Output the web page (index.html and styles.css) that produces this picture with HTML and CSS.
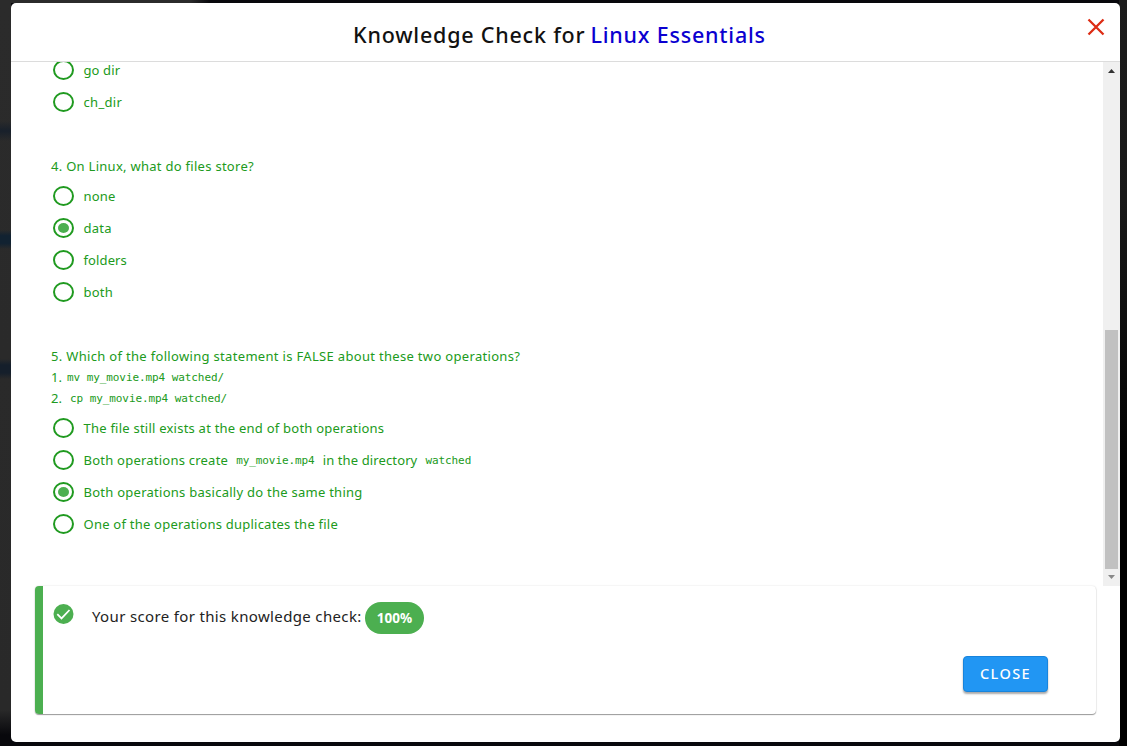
FILE: index.html
```html
<!DOCTYPE html>
<html lang="en">
<head>
<meta charset="utf-8">
<title>Knowledge Check for Linux Essentials</title>
<link rel="stylesheet" href="styles.css">
</head>
<body>
<div class="dialog">
  <header class="header">
    <h1 class="title"><span class="t-main">Knowledge Check for</span><span class="t-course">Linux Essentials</span></h1>
    <svg class="dismiss" width="18" height="18" viewBox="0 0 18 18"><path d="M1.5 1.5l15 15M16.5 1.5l-15 15" stroke="#dd2c14" stroke-width="2.3" fill="none"/></svg>
  </header>
  <div class="viewport">
    <main class="quiz">
      <section class="question first">
        <label class="option"><i class="radio"></i><span class="short">go dir</span></label>
        <label class="option"><i class="radio"></i><span class="ask-width">ch_dir</span></label>
      </section>
      <section class="question">
        <p class="prompt"><span class="ask tight">4. On Linux, what do files store?</span></p>
        <label class="option"><i class="radio"></i><span class="answer">none</span></label>
        <label class="option"><i class="radio on"></i><span class="answer">data</span></label>
        <label class="option"><i class="radio"></i><span class="short">folders</span></label>
        <label class="option"><i class="radio"></i><span class="answer">both</span></label>
      </section>
      <section class="question">
        <p class="prompt"><span class="ask">5. Which of the following statement is FALSE about these two operations?</span></p>
        <p class="prompt"><span class="num one">1.</span><code>mv my_movie.mp4 watched/</code></p>
        <p class="prompt"><span class="num two">2.</span><code>cp my_movie.mp4 watched/</code></p>
        <label class="option"><i class="radio"></i><span class="answer">The file still exists at the end of both operations</span></label>
        <label class="option"><i class="radio"></i><span class="answer">Both operations create</span><code class="inline">my_movie.mp4</code><span class="short">in the directory</span><code class="inline">watched</code></label>
        <label class="option"><i class="radio on"></i><span class="answer wide">Both operations basically do the same thing</span></label>
        <label class="option"><i class="radio"></i><span class="answer">One of the operations duplicates the file</span></label>
      </section>
    </main>
    <div class="scrollbar">
      <svg width="7" height="4" viewBox="0 0 7 4"><path d="M3.5 0L7 4H0z" fill="#333"/></svg>
      <div class="thumb"></div>
      <svg width="7" height="4" viewBox="0 0 7 4"><path d="M0 0h7L3.5 4z" fill="#888"/></svg>
    </div>
  </div>
  <footer class="result">
    <div class="score">
      <svg class="check" width="21" height="20" viewBox="0 0 21 20"><circle cx="10.5" cy="10" r="10" fill="#4caf50"/><path d="M4.3 10.2l4.2 4.2 8-8.4" stroke="#fff" stroke-width="1.8" fill="none"/></svg>
      <span class="score-text">Your score for this knowledge check:</span>
      <span class="badge"><span>100%</span></span>
    </div>
    <button class="close" type="button">CLOSE</button>
  </footer>
</div>
</body>
</html>
```
FILE: styles.css
```css
* { box-sizing: border-box; }
body {
  margin: 0;
  width: 1127px;
  height: 746px;
  overflow: hidden;
  padding: 3px 7px 4px 11px;
  font-family: "Noto Sans", "Open Sans", sans-serif;
  background:
    linear-gradient(#2b2b2b00, #18202b, #2b2b2b00) 0 121px / 11px 20px no-repeat,
    linear-gradient(#2b2b2b00, #112231 30%, #112231 70%, #2b2b2b00) 0 230px / 11px 19px no-repeat,
    linear-gradient(#2b2b2b00, #151f2b 30%, #151f2b 70%, #2b2b2b00) 0 359px / 11px 20px no-repeat,
    linear-gradient(#2b2b2b 0, #292929 710px, #08080c 735px) 0 0 / 11px 746px no-repeat,
    linear-gradient(90deg, #2b2b2b 190px, #08080c 210px) 0 0 / 210px 3px no-repeat,
    linear-gradient(#1c1c1c, #181818 200px, #000 480px, #000) 1119px 0 / 8px 746px no-repeat,
    #08080c;
}
.dialog {
  display: flex;
  flex-direction: column;
  height: 739px;
  background: #fff;
  border-radius: 5px;
  overflow: hidden;
}
.header {
  display: grid;
  grid-template-columns: 342px auto 1fr;
  height: 59px;
  flex: none;
  border-bottom: 1px solid #dcdcdc;
}
.title {
  grid-column: 2;
  display: flex;
  gap: 5px;
  margin: 0 12px 0 0;
  padding-top: 2px;
  font-size: 21.5px;
  font-weight: 500;
  line-height: 60px;
  letter-spacing: 0.79px;
  white-space: nowrap;
  color: #111;
}
.t-course { color: #0b00d0; }
.dismiss { justify-self: end; margin: 15px 15px 0 0; }
.viewport { display: flex; height: 524px; flex: none; overflow: hidden; }
.quiz { flex: 1; padding-left: 40px; color: #209a20; font-size: 13px; }
.question { padding-bottom: 38px; }
.first { margin-top: -8px; }
.prompt {
  display: flex;
  align-items: center;
  margin: 0;
  height: 21px;
  white-space: nowrap;
}
.ask, .num { padding-bottom: 2px; }
.ask, .ask-width { letter-spacing: 0.32px; }
.tight { letter-spacing: 0.28px; }
.prompt + .option { margin-top: 3px; }
.option { display: flex; align-items: center; height: 32px; white-space: nowrap; }
.answer { letter-spacing: 0.23px; }
.wide { letter-spacing: 0.26px; }
.short { letter-spacing: 0.12px; }
.radio {
  display: flex;
  width: 21px;
  height: 20px;
  margin: 0 9.5px 0 2px;
  border: 2px solid #209a20;
  border-radius: 50%;
}
.on::after {
  content: "";
  width: 11px;
  height: 10px;
  margin: 3px;
  border-radius: 50%;
  background: #4caf50;
}
code { font-family: "DejaVu Sans Mono", monospace; font-size: 11px; letter-spacing: -0.08px; }
.inline { margin: 0 8px; }
.num { flex: none; }
.one { width: 16px; }
.two { width: 19px; }
.scrollbar {
  display: flex;
  flex-direction: column;
  align-items: center;
  width: 17px;
  padding: 7px 0 7px;
  background: #f0f0f0;
}
.thumb { width: 13px; height: 239px; margin: 257px 0 6px; background: #c1c1c1; }
.result {
  display: flex;
  flex-direction: column;
  justify-content: space-between;
  height: 128px;
  margin: 0 24px;
  padding: 16px 48px 22px 10px;
  border-left: 8px solid #4caf50;
  border-radius: 4px;
  box-shadow: 0 1px 1px #999, 0 0 2px #ddd;
}
.score { display: flex; align-items: center; height: 32px; color: #222; font-size: 15px; white-space: nowrap; }
.check { margin: -8px 18px 0 0; }
.score-text { width: 273px; padding-bottom: 5px; letter-spacing: 0.35px; }
.badge {
  display: flex;
  align-items: center;
  justify-content: center;
  width: 59px;
  height: 32px;
  border-radius: 16px;
  background: #4caf50;
  color: #fff;
  font-size: 13.5px;
  font-weight: 700;
}
.close {
  align-self: flex-end;
  width: 85px;
  height: 36px;
  padding: 0 0 2px;
  border: 1px solid #1884dc;
  border-radius: 4px;
  background: #2196f3;
  color: #fff;
  font: 500 14.5px "Noto Sans", sans-serif;
  letter-spacing: 1.4px;
  box-shadow: 0 2px 2px #aaa;
}
```
